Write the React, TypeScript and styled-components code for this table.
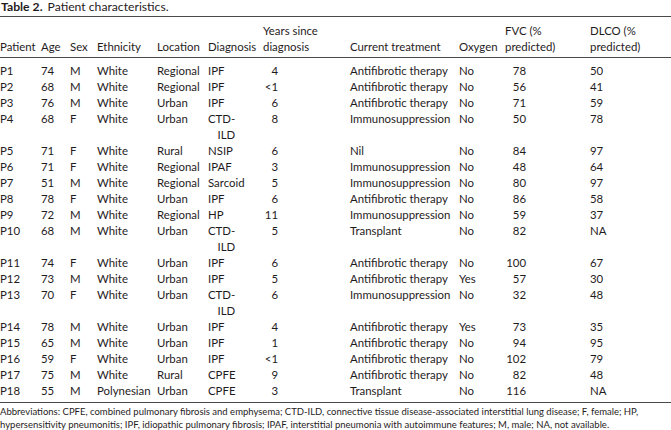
import React from "react";
import styled, { createGlobalStyle } from "styled-components";

const Global = createGlobalStyle`
  html, body { margin: 0; padding: 0; background: #fff; }
  body { font-family: Lato, "Open Sans", sans-serif; color: #1f1c1d; }
`;

const Page = styled.div`
  width: 671px;
  display: flex;
  flex-direction: column;
`;

const Caption = styled.div`
  font-size: 12.2px;
  line-height: 14px;
  height: 14px;
  padding-left: 1px;
  white-space: nowrap;
`;

const CaptionLabel = styled.b`
  font-weight: 700;
  margin-right: 5px;
`;

const Table = styled.table`
  margin-top: 2px;
  width: 671px;
  border-collapse: collapse;
  table-layout: fixed;
  font-size: 11.4px;
  line-height: 16px;
`;

const Head = styled.thead`
  border-top: 1px solid #4a4a4a;
  border-bottom: 1px solid #4a4a4a;
`;

const Body = styled.tbody`
  border-bottom: 1px solid #4a4a4a;
`;

const HeadCell = styled.th`
  font-weight: 400;
  text-align: left;
  vertical-align: bottom;
  padding: 6px 0 2px 0;
  white-space: nowrap;
`;

const Row = styled.tr<{ $first?: boolean; $last?: boolean }>`
  & > td {
    padding-top: ${(p) => (p.$first ? "5px" : "0")};
    padding-bottom: ${(p) => (p.$last ? "3px" : "0")};
  }
`;

const Cell = styled.td`
  padding: 0;
  vertical-align: top;
  white-space: nowrap;
  text-align: left;
`;

const NumBox = styled.span<{ $w: number }>`
  display: inline-block;
  width: ${(p) => p.$w}px;
  text-align: right;
`;

const Stacked = styled.span`
  display: inline-flex;
  flex-direction: column;
  align-items: flex-end;
`;

const Footnote = styled.p`
  margin: 2px 0 0 0;
  font-size: 9.5px;
  line-height: 13px;
  white-space: nowrap;
`;

type Patient = {
  id: string;
  age: number;
  sex: string;
  eth: string;
  loc: string;
  dx: string;
  years: string;
  tx: string;
  o2: string;
  fvc: string;
  dlco: string;
};

const rows: Patient[] = [
  { id: "P1", age: 74, sex: "M", eth: "White", loc: "Regional", dx: "IPF", years: "4", tx: "Antifibrotic therapy", o2: "No", fvc: "78", dlco: "50" },
  { id: "P2", age: 68, sex: "M", eth: "White", loc: "Regional", dx: "IPF", years: "<1", tx: "Antifibrotic therapy", o2: "No", fvc: "56", dlco: "41" },
  { id: "P3", age: 76, sex: "M", eth: "White", loc: "Urban", dx: "IPF", years: "6", tx: "Antifibrotic therapy", o2: "No", fvc: "71", dlco: "59" },
  { id: "P4", age: 68, sex: "F", eth: "White", loc: "Urban", dx: "CTD-ILD", years: "8", tx: "Immunosuppression", o2: "No", fvc: "50", dlco: "78" },
  { id: "P5", age: 71, sex: "F", eth: "White", loc: "Rural", dx: "NSIP", years: "6", tx: "Nil", o2: "No", fvc: "84", dlco: "97" },
  { id: "P6", age: 71, sex: "F", eth: "White", loc: "Regional", dx: "IPAF", years: "3", tx: "Immunosuppression", o2: "No", fvc: "48", dlco: "64" },
  { id: "P7", age: 51, sex: "M", eth: "White", loc: "Regional", dx: "Sarcoid", years: "5", tx: "Immunosuppression", o2: "No", fvc: "80", dlco: "97" },
  { id: "P8", age: 78, sex: "F", eth: "White", loc: "Urban", dx: "IPF", years: "6", tx: "Antifibrotic therapy", o2: "No", fvc: "86", dlco: "58" },
  { id: "P9", age: 72, sex: "M", eth: "White", loc: "Regional", dx: "HP", years: "11", tx: "Immunosuppression", o2: "No", fvc: "59", dlco: "37" },
  { id: "P10", age: 68, sex: "M", eth: "White", loc: "Urban", dx: "CTD-ILD", years: "5", tx: "Transplant", o2: "No", fvc: "82", dlco: "NA" },
  { id: "P11", age: 74, sex: "F", eth: "White", loc: "Urban", dx: "IPF", years: "6", tx: "Antifibrotic therapy", o2: "No", fvc: "100", dlco: "67" },
  { id: "P12", age: 73, sex: "M", eth: "White", loc: "Urban", dx: "IPF", years: "5", tx: "Antifibrotic therapy", o2: "Yes", fvc: "57", dlco: "30" },
  { id: "P13", age: 70, sex: "F", eth: "White", loc: "Urban", dx: "CTD-ILD", years: "6", tx: "Immunosuppression", o2: "No", fvc: "32", dlco: "48" },
  { id: "P14", age: 78, sex: "M", eth: "White", loc: "Urban", dx: "IPF", years: "4", tx: "Antifibrotic therapy", o2: "Yes", fvc: "73", dlco: "35" },
  { id: "P15", age: 65, sex: "M", eth: "White", loc: "Urban", dx: "IPF", years: "1", tx: "Antifibrotic therapy", o2: "No", fvc: "94", dlco: "95" },
  { id: "P16", age: 59, sex: "F", eth: "White", loc: "Urban", dx: "IPF", years: "<1", tx: "Antifibrotic therapy", o2: "No", fvc: "102", dlco: "79" },
  { id: "P17", age: 75, sex: "M", eth: "White", loc: "Rural", dx: "CPFE", years: "9", tx: "Antifibrotic therapy", o2: "No", fvc: "82", dlco: "48" },
  { id: "P18", age: 55, sex: "M", eth: "Polynesian", loc: "Urban", dx: "CPFE", years: "3", tx: "Transplant", o2: "No", fvc: "116", dlco: "NA" },
];

const widths = [41, 29, 27, 60, 51, 55, 87, 109, 46, 85, 81];

function Diagnosis({ dx }: { dx: string }) {
  if (dx === "CTD-ILD") {
    return (
      <Stacked>
        <span>CTD-</span>
        <span>ILD</span>
      </Stacked>
    );
  }
  return <>{dx}</>;
}

export default function App() {
  return (
    <Page>
      <Global />
      <Caption>
        <CaptionLabel>Table 2.</CaptionLabel>Patient characteristics.
      </Caption>
      <Table>
        <colgroup>
          {widths.map((w, i) => (
            <col key={i} style={{ width: w }} />
          ))}
        </colgroup>
        <Head>
          <tr>
            <HeadCell>Patient</HeadCell>
            <HeadCell>Age</HeadCell>
            <HeadCell>Sex</HeadCell>
            <HeadCell>Ethnicity</HeadCell>
            <HeadCell>Location</HeadCell>
            <HeadCell>Diagnosis</HeadCell>
            <HeadCell>
              Years since
              <br />
              diagnosis
            </HeadCell>
            <HeadCell>Current treatment</HeadCell>
            <HeadCell>Oxygen</HeadCell>
            <HeadCell>
              FVC (%
              <br />
              predicted)
            </HeadCell>
            <HeadCell>
              DLCO (%
              <br />
              predicted)
            </HeadCell>
          </tr>
        </Head>
        <Body>
          {rows.map((r, i) => (
            <Row key={r.id} $first={i === 0} $last={i === rows.length - 1}>
              <Cell>{r.id}</Cell>
              <Cell>{r.age}</Cell>
              <Cell>{r.sex}</Cell>
              <Cell>{r.eth}</Cell>
              <Cell>{r.loc}</Cell>
              <Cell>
                <Diagnosis dx={r.dx} />
              </Cell>
              <Cell>
                <NumBox $w={15}>{r.years}</NumBox>
              </Cell>
              <Cell>{r.tx}</Cell>
              <Cell>{r.o2}</Cell>
              <Cell>
                <NumBox $w={21}>{r.fvc}</NumBox>
              </Cell>
              <Cell>{r.dlco}</Cell>
            </Row>
          ))}
        </Body>
      </Table>
      <Footnote>
        Abbreviations: CPFE, combined pulmonary fibrosis and emphysema; CTD-ILD, connective tissue disease-associated interstitial lung disease; F, female; HP,
        <br />
        hypersensitivity pneumonitis; IPF, idiopathic pulmonary fibrosis; IPAF, interstitial pneumonia with autoimmune features; M, male; NA, not available.
      </Footnote>
    </Page>
  );
}
